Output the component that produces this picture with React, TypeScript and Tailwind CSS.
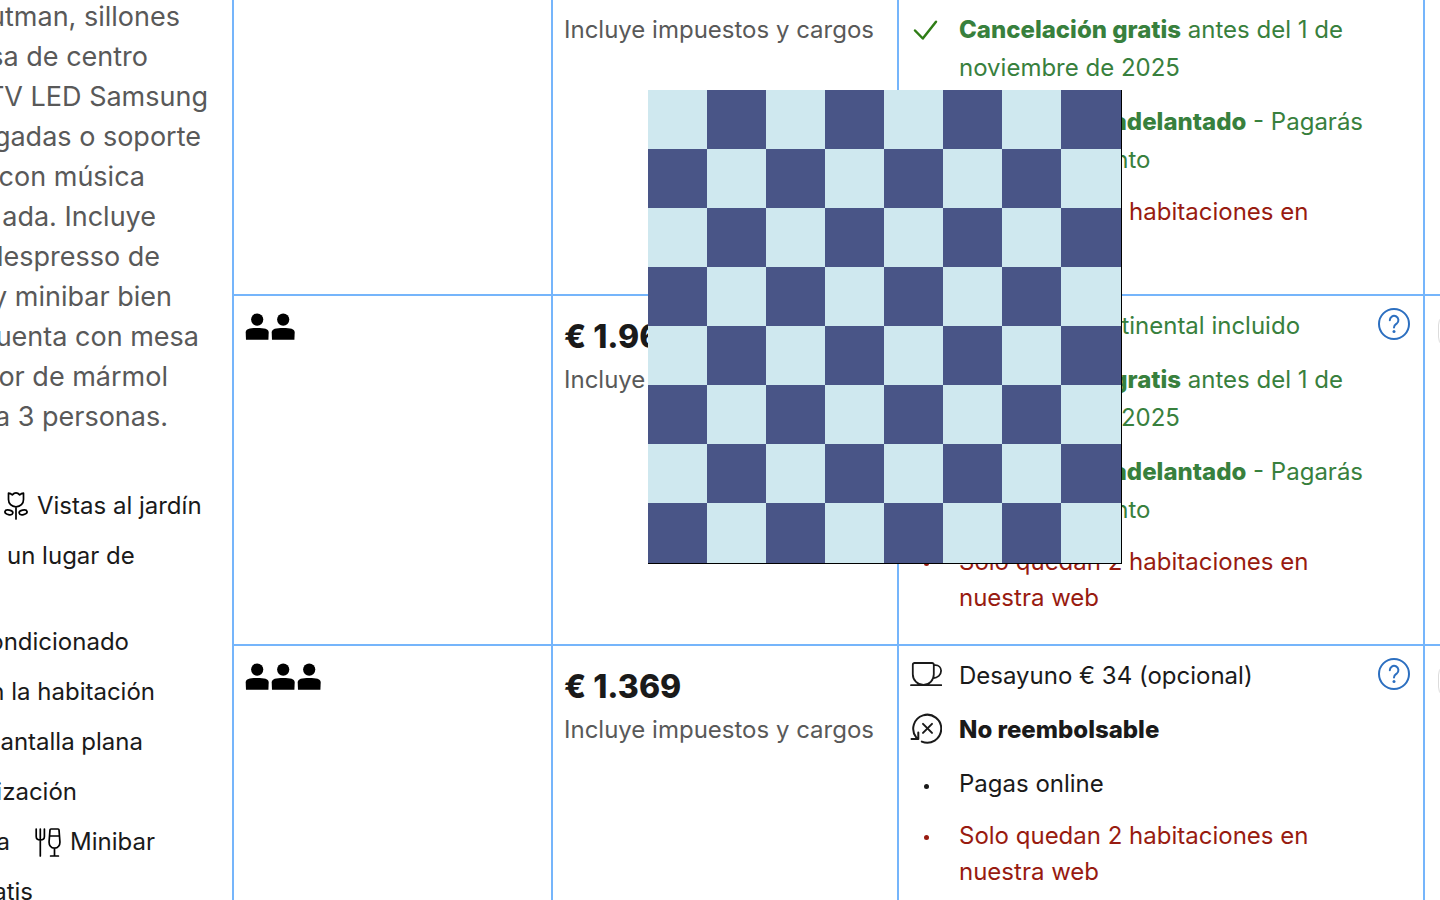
import type { ReactNode } from "react";

const description = [
  { text: "utman, sillones", edge: "w-[180px]" },
  { text: "sa de centro", edge: "w-[148px]" },
  { text: "TV LED Samsung", edge: "w-[208px]" },
  { text: "gadas o soporte", edge: "w-[201px]" },
  { text: "con música", edge: "w-[145px]" },
  { text: "ada. Incluye", edge: "w-[156px]" },
  { text: "lespresso de", edge: "w-[160px]" },
  { text: "y minibar bien", edge: "w-[172px]" },
  { text: "uenta con mesa", edge: "w-[199px]" },
  { text: "or de mármol", edge: "w-[168px]" },
  { text: "a 3 personas.", edge: "w-[168px]" },
];

function PersonIcon() {
  return (
    <svg width="24" height="28" viewBox="0 0 24 28" fill="#000" aria-hidden="true">
      <circle cx="12.200" cy="6.600" r="6.100" />
      <path d="M1 26.800L.7 19.500C.7 15.800 5 15 12.200 15s11.500.8 11.500 4.500l-.3 7.300Z" />
    </svg>
  );
}

function TulipIcon() {
  return (
    <svg width="24" height="28" viewBox="0 0 24 28" fill="none" stroke="#000" strokeWidth="1.7" strokeLinecap="round" strokeLinejoin="round" aria-hidden="true">
      <path d="M4.500 1.200c2 .1 2.700.7 3.800 1.700C9.600 1.400 10.600.9 12 .9s2.400.5 3.700 2C16.800 1.900 17.500 1.300 19.500 1.200V7.500c0 4.200-3 7.300-7.500 7.300S4.500 11.700 4.500 7.500ZM12 14.800V27" />
      <ellipse cx="4.900" cy="20.300" rx="4" ry="2.300" transform="rotate(12 4.900 20.300)" />
      <ellipse cx="19.100" cy="20.300" rx="4" ry="2.300" transform="rotate(-12 19.100 20.300)" />
    </svg>
  );
}

function MinibarIcon() {
  return (
    <svg width="26" height="29" viewBox="0 0 26 29" fill="none" stroke="#000" strokeWidth="1.7" strokeLinecap="round" strokeLinejoin="round" aria-hidden="true">
      <path d="M1.200 1v7.500c0 2.500 1.500 3.500 4.100 3.500s4.100-1 4.100-3.500V1M5.300 1v27" />
      <path d="M16 1h7a1 1 0 0 1 1 .9l.9 11.600c.3 3.800-1.900 6.700-5.400 6.700s-5.700-2.900-5.400-6.700L15 1.900A1 1 0 0 1 16 1ZM14.600 8h9.800M19.500 20.200V28M15.600 28h7.800" />
    </svg>
  );
}

function CheckIcon() {
  return (
    <svg width="32" height="32" viewBox="0 0 32 32" fill="none" stroke="#2f7d16" strokeWidth="2.500" strokeLinecap="round" strokeLinejoin="round" aria-hidden="true">
      <path d="M5 17.500l7.800 8L26 8.800" />
    </svg>
  );
}

function CupIcon() {
  return (
    <svg width="32" height="32" viewBox="0 0 32 32" fill="none" stroke="#1a1a1a" strokeWidth="1.800" strokeLinecap="round" strokeLinejoin="round" aria-hidden="true">
      <path d="M4.500 4h17.600a1.700 1.700 0 0 1 1.700 1.700v9.500c0 6.200-4.700 10.600-10.300 10.600S2.800 21.500 2.800 15.200V5.700A1.700 1.700 0 0 1 4.500 4ZM23.800 6.200h1.600c3.300 0 5.700 2.500 5.700 5.600 0 3.800-3.300 6.900-8.300 7.600M1 26.200h30.500" />
    </svg>
  );
}

function NoRefundIcon() {
  return (
    <svg width="32" height="32" viewBox="0 0 32 32" fill="none" stroke="#1a1a1a" strokeWidth="2" strokeLinecap="round" strokeLinejoin="round" aria-hidden="true">
      <path d="M11.800 28.600a14 14 0 1 0-5.600-4.300l1.300 1.700M1.500 26h6.800v-6.500" />
      <path d="M13 10.900l9 9M22 10.900l-9 9" />
    </svg>
  );
}

function Dot() {
  return (
    <svg width="32" height="32" viewBox="0 0 32 32" fill="currentColor" aria-hidden="true">
      <circle cx="16.500" cy="19.500" r="2.500" />
    </svg>
  );
}

function Condition({ icon, children }: { icon: ReactNode; children: ReactNode }) {
  return (
    <li className="flex gap-[17px] leading-[38px]">
      <span className="mt-0.5 shrink-0">{icon}</span>
      <span className="whitespace-nowrap">{children}</span>
    </li>
  );
}

function Scarcity() {
  return (
    <li className="-mt-px flex gap-[17px] leading-9 text-[#981b10]">
      <span className="shrink-0">
        <Dot />
      </span>
      <span className="whitespace-nowrap">
        Solo quedan 2 habitaciones en
        <br />
        nuestra web
      </span>
    </li>
  );
}

function FreeCancellation() {
  return (
    <>
      <Condition icon={<CheckIcon />}>
        <b className="font-extrabold">Cancelación gratis</b> antes del 1 de
        <br />
        noviembre de 2025
      </Condition>
      <Condition icon={<CheckIcon />}>
        <b className="font-extrabold">Sin pago por adelantado</b> - Pagarás
        <br />
        en el alojamiento
      </Condition>
      <Scarcity />
    </>
  );
}

function HelpButton() {
  return (
    <button type="button" aria-label="Más información" className="mt-px size-8 shrink-0">
      <svg width="32" height="32" viewBox="0 0 32 32" fill="none" stroke="#2c6fc0" strokeWidth="2" strokeLinecap="round" strokeLinejoin="round" aria-hidden="true">
        <circle cx="16" cy="16" r="15" />
        <path d="M11.800 12.200a4.300 4.300 0 1 1 7 3.300c-1.600 1.200-2.800 1.800-2.800 3.900" />
        <circle cx="16" cy="23.500" r="1.500" fill="#2c6fc0" stroke="none" />
      </svg>
    </button>
  );
}

function Guests({ count }: { count: number }) {
  return (
    <div className="flex gap-0.5" role="img" aria-label={`${count} personas`}>
      {Array.from({ length: count }, (_, i) => (
        <PersonIcon key={i} />
      ))}
    </div>
  );
}

function Price({ amount }: { amount: string }) {
  return (
    <>
      <div className="text-[32px] leading-[48px] font-extrabold">{amount}</div>
      <div className="leading-[38px] whitespace-nowrap text-[#595959]">Incluye impuestos y cargos</div>
    </>
  );
}

function Quantity() {
  return (
    <select aria-label="Cantidad de habitaciones" className="h-9 w-20 rounded-xl border border-[#dcdcdc] bg-white">
      <option>0</option>
      <option>1</option>
      <option>2</option>
    </select>
  );
}

function Facility({ text, edge }: { text: string; edge: string }) {
  return <div className={`flex justify-end ${edge}`}>{text}</div>;
}

function Checkerboard() {
  return (
    <div className="absolute top-[90px] left-[648px] grid grid-cols-[repeat(7,59px)_60px] grid-rows-[repeat(7,59px)_60px] border-r border-b border-black">
      {Array.from({ length: 64 }, (_, i) => (
        <div key={i} className={(Math.floor(i / 8) + i) % 2 ? "bg-[#495587]" : "bg-[#cfe8ef]"} />
      ))}
    </div>
  );
}

export default function App() {
  const line = "border-[#75b5fb]";
  return (
    <main className="relative h-screen overflow-hidden bg-white font-['Inter','Liberation_Sans',sans-serif] text-[24px] text-[#1a1a1a]">
      <table className="w-full table-fixed border-separate border-spacing-0">
        <colgroup>
          <col className="w-[234px]" />
          <col className="w-[319px]" />
          <col className="w-[346px]" />
          <col />
          <col className="w-[15px]" />
        </colgroup>
        <tbody className="align-top">
          <tr className="h-[296px]">
            <td rowSpan={3} className={`overflow-hidden border-r-2 whitespace-nowrap ${line}`}>
              <div className="-mt-[3px] text-[27px] leading-10 text-[#595959]">
                {description.map((row) => (
                  <div key={row.text} className={`flex justify-end ${row.edge}`}>
                    {row.text}
                  </div>
                ))}
              </div>
              <div className="mt-11 leading-[50px]">
                <div className="flex items-center gap-[9px] pl-1">
                  <TulipIcon />
                  Vistas al jardín
                </div>
                <div className="pl-[7px]">un lugar de</div>
              </div>
              <div className="mt-9 leading-[50px]">
                <Facility text="ondicionado" edge="w-[129px]" />
                <Facility text="n la habitación" edge="w-[155px]" />
                <Facility text="antalla plana" edge="w-[143px]" />
                <Facility text="ización" edge="w-[77px]" />
                <div className="flex items-center">
                  <Facility text="a" edge="w-[10px]" />
                  <span className="flex items-center gap-[9px] pl-[25px]">
                    <MinibarIcon />
                    Minibar
                  </span>
                </div>
                <Facility text="atis" edge="w-[33px]" />
              </div>
            </td>
            <td className={`border-r-2 border-b-2 ${line}`} />
            <td className={`border-r-2 border-b-2 pt-[11px] pl-[11px] ${line}`}>
              <div className="leading-[38px] whitespace-nowrap text-[#595959]">Incluye impuestos y cargos</div>
            </td>
            <td className={`border-r-2 border-b-2 pt-[11px] pl-[11px] ${line}`}>
              <ul className="flex flex-col gap-4 text-[#38803d]">
                <FreeCancellation />
              </ul>
            </td>
            <td className={`border-b-2 ${line}`} />
          </tr>
          <tr className="h-[350px]">
            <td className={`border-r-2 border-b-2 pt-[17px] pl-[11px] ${line}`}>
              <Guests count={2} />
            </td>
            <td className={`border-r-2 border-b-2 pt-[17px] pl-[11px] ${line}`}>
              <Price amount="€ 1.964" />
            </td>
            <td className={`border-r-2 border-b-2 pt-[11px] pr-[13px] pl-[11px] ${line}`}>
              <div className="flex justify-between">
                <ul className="flex flex-col gap-4 text-[#38803d]">
                  <Condition icon={<CupIcon />}>Desayuno continental incluido</Condition>
                  <FreeCancellation />
                </ul>
                <HelpButton />
              </div>
            </td>
            <td className={`overflow-hidden border-b-2 pt-[17px] pl-[13px] ${line}`}>
              <Quantity />
            </td>
          </tr>
          <tr className="h-[350px]">
            <td className={`border-r-2 pt-[17px] pl-[11px] ${line}`}>
              <Guests count={3} />
            </td>
            <td className={`border-r-2 pt-[17px] pl-[11px] ${line}`}>
              <Price amount="€ 1.369" />
            </td>
            <td className={`border-r-2 pt-[11px] pr-[13px] pl-[11px] ${line}`}>
              <div className="flex justify-between">
                <ul className="flex flex-col gap-4">
                  <Condition icon={<CupIcon />}>Desayuno € 34 (opcional)</Condition>
                  <Condition icon={<NoRefundIcon />}>
                    <b className="font-extrabold">No reembolsable</b>
                  </Condition>
                  <Condition icon={<Dot />}>Pagas online</Condition>
                  <Scarcity />
                </ul>
                <HelpButton />
              </div>
            </td>
            <td className="overflow-hidden pt-[17px] pl-[13px]">
              <Quantity />
            </td>
          </tr>
        </tbody>
      </table>
      <Checkerboard />
    </main>
  );
}
